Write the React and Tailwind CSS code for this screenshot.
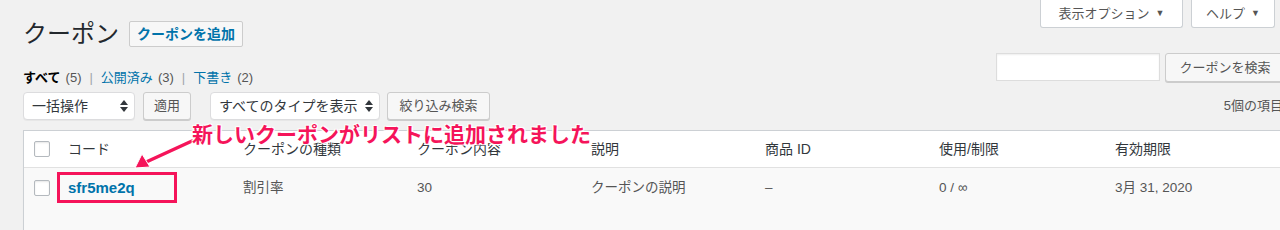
import React from 'react';

const font = "font-['Liberation_Sans','Noto_Sans_CJK_JP',sans-serif]";
const pink = '#f5145a';

const SortArrows = () => (
  <svg width="8" height="12" viewBox="0 0 8 12" className="shrink-0">
    <path d="M4 0 L8 5 L0 5 Z" fill="#32373c" />
    <path d="M4 12 L8 7 L0 7 Z" fill="#32373c" />
  </svg>
);

const FakeSelect = ({ label, width }) => (
  <div
    className={`h-[28px] ${width} bg-white border border-[#dcdcde] rounded-[4px] flex items-center justify-between pl-[8px] pr-[6px] text-[14px] text-[#32373c] shadow-[0_1px_0_rgba(0,0,0,0.04)]`}
  >
    <span>{label}</span>
    <SortArrows />
  </div>
);

const GrayButton = ({ children, className = '' }) => (
  <button
    className={`h-[28px] px-[10px] bg-[#f7f7f7] border border-[#cccccc] rounded-[3px] text-[13px] text-[#555] shadow-[0_1px_0_#cccccc] ${className}`}
  >
    {children}
  </button>
);

const Checkbox = () => (
  <div className="w-[16px] h-[16px] bg-white border border-[#b4b9be] rounded-[2px] shadow-[inset_0_1px_2px_rgba(0,0,0,0.1)]" />
);

const columns = ['コード', 'クーポンの種類', 'クーポン内容', '説明', '商品 ID', '使用/制限', '有効期限'];
const widths = ['w-[175px]', 'w-[174px]', 'w-[174px]', 'w-[174px]', 'w-[174px]', 'w-[176px]', 'w-[176px]'];
const row = ['割引率', '30', 'クーポンの説明', '–', '0 / ∞', '3月 31, 2020'];

export default function App() {
  return (
    <div className={`w-full h-[230px] overflow-hidden bg-[#f1f1f1] ${font}`}>
      <div className="relative w-[1285px] pl-[23px]">
        {/* header: title + screen tabs */}
        <div className="flex justify-between h-[53px]">
          <div className="flex items-center gap-[10px] pt-[21px] self-start">
            <h1 className="text-[24px] text-[#23282d] leading-[26px]">クーポン</h1>
            <button className="h-[26px] px-[7px] bg-[#f7f7f7] border border-[#cccccc] rounded-[2px] text-[14px] font-bold text-[#0073aa]">
              クーポンを追加
            </button>
          </div>
          <div className="flex gap-[8px] mr-[10px] self-start">
            <div className="w-[143px] h-[28px] bg-white border border-t-0 border-[#ccd0d4] rounded-b-[3px] flex items-center justify-center gap-[6px] text-[13px] text-[#555]">
              表示オプション <span className="text-[9px]">▼</span>
            </div>
            <div className="w-[84px] h-[28px] bg-white border border-t-0 border-[#ccd0d4] rounded-b-[3px] flex items-center justify-center gap-[6px] text-[13px] text-[#555]">
              ヘルプ <span className="text-[9px]">▼</span>
            </div>
          </div>
        </div>

        {/* views + search */}
        <div className="flex justify-between h-[39px]">
          <div className="mt-[11px] leading-[20px] text-[13px] text-[#555] flex items-center">
            <span className="font-bold text-black">すべて</span>
            <span className="ml-[5px]">(5)</span>
            <span className="mx-[8px] text-[#a0a5aa]">|</span>
            <span className="text-[#0073aa]">公開済み</span>
            <span className="ml-[5px]">(3)</span>
            <span className="mx-[8px] text-[#a0a5aa]">|</span>
            <span className="text-[#0073aa]">下書き</span>
            <span className="ml-[5px]">(2)</span>
          </div>
          <div className="flex items-start gap-[5px]">
            <div className="w-[164px] h-[28px] bg-white border border-[#dddddd] shadow-[inset_0_1px_2px_rgba(0,0,0,0.07)]" />
            <GrayButton className="w-[120px] h-[29px]">クーポンを検索</GrayButton>
          </div>
        </div>

        {/* toolbar */}
        <div className="flex items-center justify-between h-[28px]">
          <div className="flex items-center">
            <FakeSelect label="一括操作" width="w-[112px]" />
            <GrayButton className="ml-[8px] w-[48px] px-0">適用</GrayButton>
            <FakeSelect label="すべてのタイプを表示" width="w-[170px] ml-[19px]" />
            <GrayButton className="ml-[7px] w-[103px] px-0">絞り込み検索</GrayButton>
          </div>
          <span className="text-[13px] text-[#555] mr-[2px]">5個の項目</span>
        </div>

        {/* table */}
        <div className="mt-[10px] border border-[#ccd0d4] bg-white shadow-[0_1px_1px_rgba(0,0,0,0.04)]">
          <div className="flex h-[37px] items-center border-b border-[#e1e1e1] text-[14px] text-[#32373c]">
            <div className="w-[34px] pl-[10px] shrink-0">
              <Checkbox />
            </div>
            {columns.map((c, i) => (
              <div key={c} className={`${widths[i]} pl-[10px] shrink-0`}>
                {c}
              </div>
            ))}
          </div>
          <div className="flex h-[70px] items-start pt-[10px] bg-[#f9f9f9] text-[13.5px] text-[#555]">
            <div className="w-[34px] pl-[10px] shrink-0 pt-[2px]">
              <Checkbox />
            </div>
            <div className="w-[175px] pl-[10px] shrink-0 text-[15px] font-bold text-[#0073aa] leading-[20px]">
              sfr5me2q
            </div>
            {row.map((c, i) => (
              <div key={i} className={`${widths[i + 1]} pl-[10px] shrink-0 leading-[20px]`}>
                {c}
              </div>
            ))}
          </div>
        </div>

        {/* annotation overlays */}
        <div className="absolute left-[57px] top-[172px] w-[120px] h-[31px] border-[3px] border-[#f5145a]" />
        <svg className="absolute left-[130px] top-[135px]" width="70" height="40" viewBox="0 0 70 40">
          <line x1="62" y1="6" x2="14" y2="28" stroke="white" strokeWidth="6" strokeLinecap="round" />
          <line x1="62" y1="6" x2="14" y2="28" stroke={pink} strokeWidth="3.5" strokeLinecap="round" />
          <path d="M5 33 L12 19 L20 32 Z" fill={pink} stroke="white" strokeWidth="1" />
        </svg>
        <div className="absolute left-[192px] top-[121px] text-[21px] leading-[28px] font-bold text-[#f5145a] whitespace-nowrap [text-shadow:0_0_2px_white,1px_1px_1px_white,-1px_-1px_1px_white,1px_-1px_1px_white,-1px_1px_1px_white]">
          新しいクーポンがリストに追加されました
        </div>
      </div>
    </div>
  );
}
